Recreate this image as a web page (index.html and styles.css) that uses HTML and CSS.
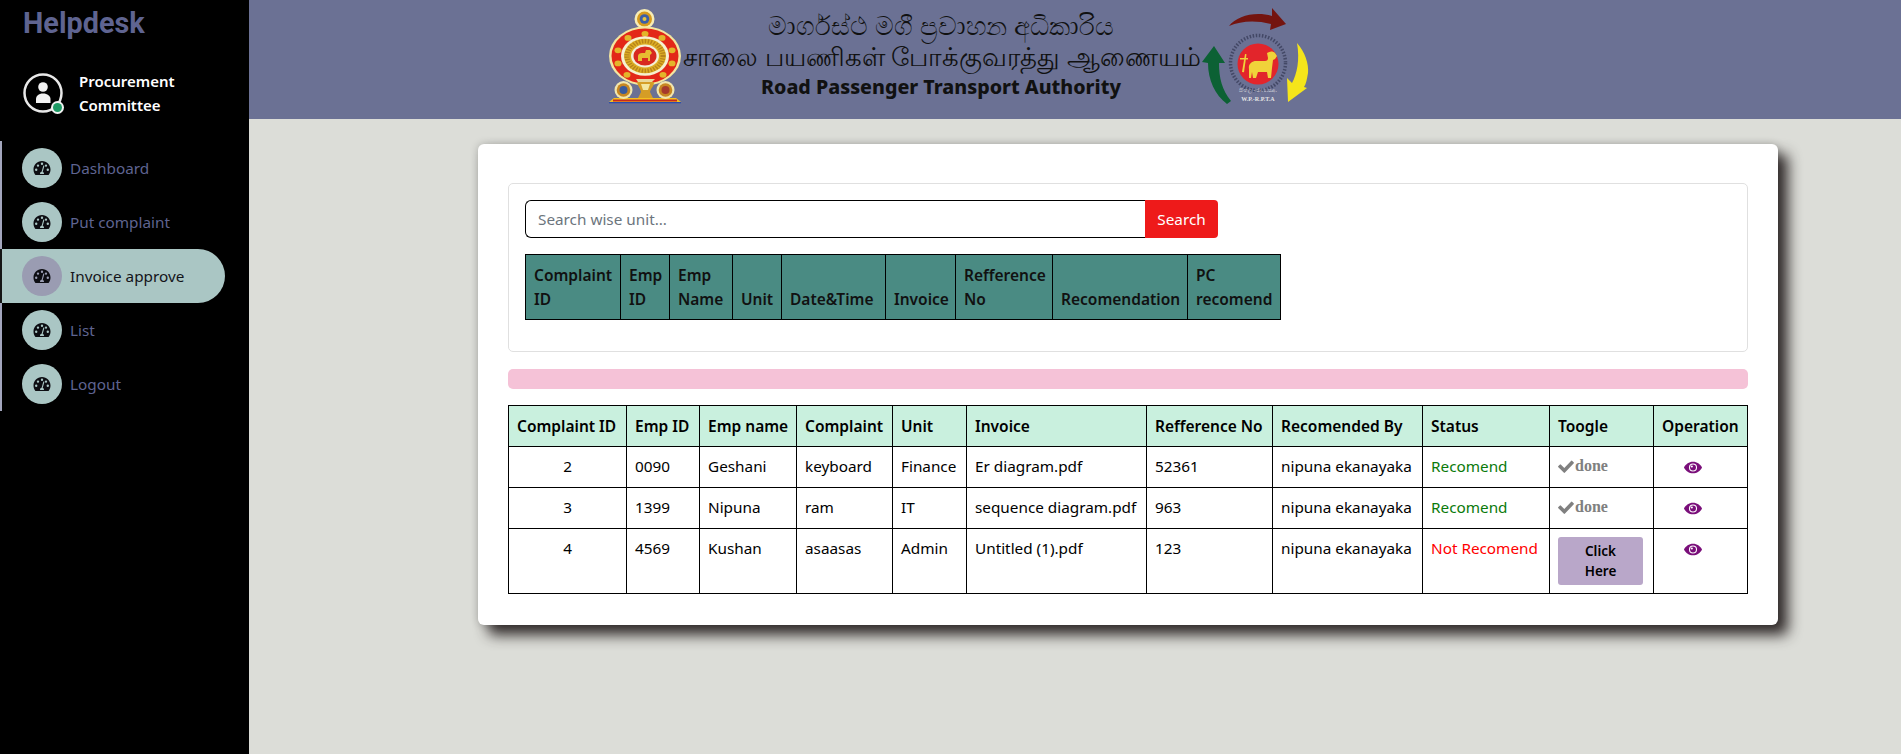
FILE: index.html
```html
<!DOCTYPE html>
<html lang="en">
<head>
<meta charset="utf-8">
<title>Helpdesk</title>
<link rel="stylesheet" href="styles.css">
</head>
<body>
<svg class="defs" width="0" height="0" aria-hidden="true">
  <symbol id="gauge" viewBox="0 0 18 16">
    <path fill-rule="evenodd" d="M9 1C4.2 1 .5 4.7.5 9.5c0 2 .6 3.8 1.7 5.2.3.3.6.3.9.3h11.800c.3 0 .6 0 .9-.3 1.100-1.400 1.700-3.200 1.700-5.200C17.500 4.700 13.800 1 9 1zM3.200 11a1.200 1.200 0 1 1 0-2.400 1.200 1.200 0 0 1 0 2.400zM5 6.800a1.200 1.200 0 1 1 0-2.400 1.200 1.200 0 0 1 0 2.400zM9 5a1.200 1.200 0 1 1 0-2.400A1.200 1.200 0 0 1 9 5zm1.700 7.600c.3.500.4 1 .2 1.500H7.100c-.2-.5-.1-1 .2-1.500.3-.5.800-.8 1.300-.9l1.600-5.800c.1-.4.400-.5.700-.4.300.1.500.4.400.7l-1.600 5.800c.4.200.8.400 1 .6zM13 6.800a1.200 1.200 0 1 1 0-2.400 1.200 1.200 0 0 1 0 2.400zm1.800 4.200a1.200 1.200 0 1 1 0-2.400 1.200 1.200 0 0 1 0 2.400z"/>
  </symbol>
  <symbol id="eye" viewBox="0 0 20 14">
    <path fill-rule="evenodd" d="M10 .5C5.500.5 2 3.300.2 6.500a1 1 0 0 0 0 1C2 10.700 5.500 13.500 10 13.500s8-2.800 9.800-6a1 1 0 0 0 0-1C18 3.300 14.500.5 10 .5zm0 11a4.500 4.500 0 1 1 0-9 4.500 4.500 0 0 1 0 9z"/>
    <path fill-rule="evenodd" d="M10 3.700a3.300 3.300 0 1 0 0 6.600 3.300 3.300 0 0 0 0-6.600zm-1.300 1a1.200 1.200 0 1 1 0 2.400 1.200 1.200 0 0 1 0-2.400z"/>
  </symbol>
  <symbol id="check" viewBox="0 0 16 13">
    <path d="M5.700 12.600.4 7.300a.9.900 0 0 1 0-1.300l1.300-1.300a.9.900 0 0 1 1.300 0l3.300 3.300L13 .9a.9.900 0 0 1 1.300 0l1.300 1.300a.9.900 0 0 1 0 1.300L7 12.600a.9.900 0 0 1-1.300 0z"/>
  </symbol>
</svg>

<div class="app">
  <aside class="sidebar">
    <h1 class="brand">Helpdesk</h1>
    <div class="user">
      <div class="avatar">
        <svg viewBox="0 0 40 40" width="40" height="40">
          <circle cx="20" cy="20" r="18.500" fill="#000" stroke="#e8e8e8" stroke-width="2.500"/>
          <circle cx="20" cy="14" r="4.800" fill="#f2f2f2"/>
          <path d="M13 30v-4c0-3 2.500-5.500 7-5.500s7.500 2.500 7.500 5.500v4z" fill="#f2f2f2"/>
        </svg>
        <span class="online"></span>
      </div>
      <p class="user-name">Procurement Committee</p>
    </div>
    <nav class="nav">
      <a class="nav-item"><span class="nav-icon"><svg class="gauge"><use href="#gauge"/></svg></span>Dashboard</a>
      <a class="nav-item"><span class="nav-icon"><svg class="gauge"><use href="#gauge"/></svg></span>Put complaint</a>
      <a class="nav-item active"><span class="nav-icon"><svg class="gauge"><use href="#gauge"/></svg></span>Invoice approve</a>
      <a class="nav-item"><span class="nav-icon"><svg class="gauge"><use href="#gauge"/></svg></span>List</a>
      <a class="nav-item"><span class="nav-icon"><svg class="gauge"><use href="#gauge"/></svg></span>Logout</a>
    </nav>
  </aside>

  <div class="content">
    <header class="banner">
      <svg class="emblem" viewBox="0 0 90 110" width="90" height="110">
        <path d="M9 102l5-4h62l5 4z" fill="#f3c020"/>
        <rect x="13" y="99.500" width="64" height="2" fill="#c8281e"/>
        <rect x="9" y="102" width="72" height="1.300" fill="#2a4db0"/>
        <ellipse cx="44.500" cy="19" rx="10" ry="10" fill="#f7edb5"/>
        <circle cx="44.500" cy="19" r="7.500" fill="#d69a1d"/>
        <circle cx="44.500" cy="19" r="4.800" fill="#3b5fa8"/>
        <circle cx="44.500" cy="19" r="2" fill="#e8c640"/>
        <g transform="translate(45 56) scale(1 .82) translate(-45 -56)">
          <circle cx="45" cy="56" r="36" fill="#f3e6a0"/>
          <circle cx="45" cy="56" r="33.500" fill="#e32718"/>
          <g fill="#e3b52a">
            <circle cx="45" cy="29" r="3.500"/><circle cx="28" cy="34" r="3.500"/><circle cx="62" cy="34" r="3.500"/>
            <circle cx="18" cy="49" r="3.500"/><circle cx="72" cy="49" r="3.500"/><circle cx="18" cy="65" r="3.500"/>
            <circle cx="72" cy="65" r="3.500"/><circle cx="27" cy="79" r="3.500"/><circle cx="63" cy="79" r="3.500"/>
          </g>
          <circle cx="45" cy="56" r="24" fill="#f6f1d0"/>
          <circle cx="45" cy="56" r="21" fill="#dcae24"/>
          <circle cx="45" cy="56" r="18" fill="none" stroke="#b7831a" stroke-width="5" stroke-dasharray="1.500 1.500"/>
          <circle cx="45" cy="56" r="14" fill="#f4efd6"/>
          <circle cx="45" cy="56" r="11.500" fill="#d8281f"/>
        </g>
        <path d="M38 61v-5c0-2 2-3 4-3h3l1-3h4l2 3-2 2v6h-2v-3h-6v3z" fill="#e7bd31"/>
        <path d="M38 82h14l3-3H36z" fill="#e9d79a"/>
        <path d="M37 82c1 5 4 7 4 10l-3 6h15l-3-6c0-3 4-5 4-10z" fill="#d59d26"/>
        <path d="M41 84h9l-2 6h-5z" fill="#f3e6a0"/>
        <circle cx="23.500" cy="90" r="9" fill="#f1e6ae"/><circle cx="23.500" cy="90" r="6.800" fill="#c78622"/><circle cx="23.500" cy="90" r="4" fill="#3a5a9c"/>
        <circle cx="65.500" cy="90" r="9" fill="#f1e6ae"/><circle cx="65.500" cy="90" r="6.800" fill="#c78622"/><circle cx="65.500" cy="90" r="4" fill="#a63a2c"/>
      </svg>
      <div class="banner-text">
        <p class="banner-si" lang="si">මාර්ගස්ථ මගී ප්‍රවාහන අධිකාරිය</p>
        <p class="banner-ta" lang="ta">சாலை பயணிகள் போக்குவரத்து ஆணையம்</p>
        <p class="banner-en">Road Passenger Transport Authority</p>
      </div>
      <svg class="rpta" viewBox="0 0 120 110" width="120" height="110">
        <path d="M34 26C42 16 60 11 77 16L77 8 91 24 75 30 76 24C60 20 46 21 34 26z" fill="#74140f"/>
        <path d="M19 46L30 63H24C24 78 27 90 36 101L32 104C20 95 13 80 13 63L7 62z" fill="#0c6134"/>
        <path d="M102 43C110 52 114 64 113 73 112 79 111 84 109 87L112 88 93 102 92 78 97 83C102 74 105 60 102 43z" fill="#f5e51b"/>
        <circle cx="63" cy="63" r="27.500" fill="none" stroke="#23263f" stroke-width="3.500" stroke-dasharray="1.500 1.600" opacity=".55"/>
        <circle cx="63" cy="64" r="20.500" fill="#e2252b"/>
        <path d="M47 72l3-18 1.500.3-2.500 18z" fill="#f0d23a"/>
        <path d="M45 58h8v1.500h-8z" fill="#f0d23a"/>
        <path d="M54 78v-9c-1-5 3-8 7-8h9c2 0 3-1 3-3l-1-5c3-2 6-2 8 0l2 3-2 3-2 1-1 8-1 10h-3l-1-6h-9l-2 6h-3l-1-6-1 6z" fill="#f0d23a"/>
        <text class="rpta-si" x="63" y="92" text-anchor="middle">සිංහල - ජා.ම.ප.අ.</text>
        <text class="rpta-en" x="63" y="101" text-anchor="middle">W.P.-R.P.T.A</text>
      </svg>
    </header>

    <main class="card">
      <section class="panel">
        <form class="search">
          <input class="search-input" type="text" placeholder="Search wise unit...">
          <button class="search-btn" type="button">Search</button>
        </form>
        <table class="table-teal">
          <colgroup>
            <col class="t1"><col class="t2"><col class="t3"><col class="t4"><col class="t5"><col class="t6"><col class="t7"><col class="t8"><col class="t9">
          </colgroup>
          <thead>
            <tr>
              <th>Complaint ID</th><th>Emp ID</th><th>Emp Name</th><th>Unit</th><th>Date&amp;Time</th><th>Invoice</th><th>Refference No</th><th>Recomendation</th><th>PC recomend</th>
            </tr>
          </thead>
        </table>
      </section>

      <div class="alert-bar"></div>

      <table class="table-main">
        <colgroup>
          <col class="m1"><col class="m2"><col class="m3"><col class="m4"><col class="m5"><col class="m6"><col class="m7"><col class="m8"><col class="m9"><col class="m10"><col class="m11">
        </colgroup>
        <thead>
          <tr>
            <th>Complaint ID</th><th>Emp ID</th><th>Emp name</th><th>Complaint</th><th>Unit</th><th>Invoice</th><th>Refference No</th><th>Recomended By</th><th>Status</th><th>Toogle</th><th>Operation</th>
          </tr>
        </thead>
        <tbody>
          <tr>
            <td class="center">2</td><td>0090</td><td>Geshani</td><td>keyboard</td><td>Finance</td><td>Er diagram.pdf</td><td>52361</td><td>nipuna ekanayaka</td><td class="ok">Recomend</td>
            <td><span class="done"><svg class="check"><use href="#check"/></svg>done</span></td>
            <td class="op"><svg class="eye"><use href="#eye"/></svg></td>
          </tr>
          <tr>
            <td class="center">3</td><td>1399</td><td>Nipuna</td><td>ram</td><td>IT</td><td>sequence diagram.pdf</td><td>963</td><td>nipuna ekanayaka</td><td class="ok">Recomend</td>
            <td><span class="done"><svg class="check"><use href="#check"/></svg>done</span></td>
            <td class="op"><svg class="eye"><use href="#eye"/></svg></td>
          </tr>
          <tr>
            <td class="center">4</td><td>4569</td><td>Kushan</td><td>asaasas</td><td>Admin</td><td>Untitled (1).pdf</td><td>123</td><td>nipuna ekanayaka</td><td class="bad">Not Recomend</td>
            <td class="toggle"><button class="click-btn" type="button">Click Here</button></td>
            <td class="op"><svg class="eye"><use href="#eye"/></svg></td>
          </tr>
        </tbody>
      </table>
    </main>
  </div>
</div>
</body>
</html>
```
FILE: styles.css
```css
* { box-sizing: border-box; }
html, body { margin: 0; height: 100%; overflow: hidden; }
body { font-family: "Noto Sans", "Open Sans", sans-serif; font-size: 15.300px; color: #000; background: #dcddd8; }
.defs { position: absolute; }

.app { display: flex; height: 754px; }

.sidebar { flex: 0 0 249px; background: #000; }
.brand { margin: 0; padding: 4px 0 0 23px; height: 73px; font: 700 28.800px/38px Roboto, sans-serif; color: #5f6491; }
.user { display: flex; gap: 16px; padding-left: 23px; align-items: center; height: 40px; }
.avatar { position: relative; width: 40px; height: 40px; }
.avatar svg { display: block; }
.online { position: absolute; right: 1px; bottom: 1px; width: 9px; height: 9px; border-radius: 50%; background: #1d9a64; box-shadow: 0 0 0 2px #f2f2f2; }
.user-name { margin: 0; width: 110px; color: #fff; font-size: 15px; font-weight: 600; line-height: 24px; }

.nav { margin-top: 28px; border-left: 2px solid #a3a6bd; display: flex; flex-direction: column; }
.nav-item { display: flex; align-items: center; gap: 8px; height: 54px; padding-left: 20px; color: #5f6491; font-size: 15.300px; }
.nav-icon { width: 40px; height: 40px; border-radius: 50%; background: #aac6c4; display: flex; align-items: center; justify-content: center; }
.gauge { width: 18px; height: 16px; fill: #0d0d12; }
.nav-item.active { width: 225px; margin-left: -2px; border-left: 2px solid #151515; background-clip: padding-box; background-color: #aac6c4; color: #14141a; border-radius: 0 27px 27px 0; }
.nav-item.active .nav-icon { background: #9a9cb2; }

.content { flex: 1; display: flex; flex-direction: column; min-width: 0; }
.banner { height: 119px; background: #6b7194; display: flex; align-items: flex-start; padding: 2px 0 0 351px; }
.emblem { flex: none; margin-top: -2px; }
.banner-text { width: 516px; margin-left: -7px; text-align: center; color: #111; white-space: nowrap; }
.banner-text p { margin: 0; }
.banner-si { font-size: 26px; font-weight: 500; line-height: 30px; margin-top: 8px !important; }
.banner-ta { font-size: 25.800px; font-weight: 500; line-height: 33px; }
.banner-en { font-size: 19.600px; font-weight: 800; line-height: 28px; }
.rpta { flex: none; margin: -2px 0 0 -4px; }
.rpta-si { font: 5px "Noto Sans", sans-serif; fill: #e6e6e6; }
.rpta-en { font: 700 6px "Liberation Serif", serif; fill: #e6e6e6; }

.card { width: 1300px; height: 481px; margin: 25px 0 0 229px; padding: 39px 30px 0; background: #fff; border-radius: 6px; box-shadow: 10px 10px 14px rgba(32, 26, 26, .9), 0 0 8px rgba(0, 0, 0, .2); }

.panel { height: 169px; border: 1px solid #e0e0e0; border-radius: 5px; padding: 16px 16px 0; }
.search { display: flex; width: 693px; height: 38px; }
.search-input { flex: 1; min-width: 0; height: 38px; border: 1px solid #000; border-right: 0; border-radius: 6px 0 0 6px; padding: 0 12px; font: inherit; }
.search-input::placeholder { color: #6c757d; opacity: 1; }
.search-btn { width: 73px; border: 0; border-radius: 0 4px 4px 0; background: #ee1a1a; color: #fff; font: inherit; }

table { border-collapse: collapse; table-layout: fixed; }
th, td { border: 1px solid #000; padding: 8px; text-align: left; }
th { font-weight: 600; font-size: 15.500px; }

.table-teal { width: 755px; margin-top: 16px; background: #4a8b83; color: #111; }
.table-teal th { padding: 8px; line-height: 24px; vertical-align: bottom; height: 65px; }
.t1 { width: 95px; } .t2 { width: 49px; } .t3 { width: 63px; } .t4 { width: 49px; } .t5 { width: 104px; }
.t6 { width: 70px; } .t7 { width: 97px; } .t8 { width: 135px; } .t9 { width: 93px; }

.alert-bar { height: 20px; margin-top: 17px; background: #f5c2d7; border-radius: 5px; }

.table-main { width: 1239px; margin-top: 16px; }
.table-main th { background: #c9f0de; height: 41px; padding: 0 8px; white-space: nowrap; line-height: 24px; }
.table-main td { height: 41px; padding: 7px 8px 0; line-height: 24px; vertical-align: top; }
.m1 { width: 118px; } .m2 { width: 73px; } .m3 { width: 97px; } .m4 { width: 96px; } .m5 { width: 74px; } .m6 { width: 180px; }
.m7 { width: 126px; } .m8 { width: 150px; } .m9 { width: 127px; } .m10 { width: 104px; } .m11 { width: 94px; }
.table-main td.center { text-align: center; }
.table-main td.op { padding: 14px 0 0 30px; }
.table-main td.toggle { padding: 8px; }
.ok { color: #0a7a0a; }
.bad { color: #f00; }
.done { display: inline-flex; align-items: center; gap: 1px; color: #808080; font: 700 16px/24px "Liberation Serif", serif; }
.check { width: 16px; height: 13px; fill: #808080; }
.eye { display: block; width: 18px; height: 13px; fill: #7a0f7a; }
.click-btn { display: block; width: 85px; height: 48px; border: 0; border-radius: 3px; background: #b9a7c9; color: #000; font: 600 13.500px/20px "Noto Sans", sans-serif; padding: 0 16px; }
```
